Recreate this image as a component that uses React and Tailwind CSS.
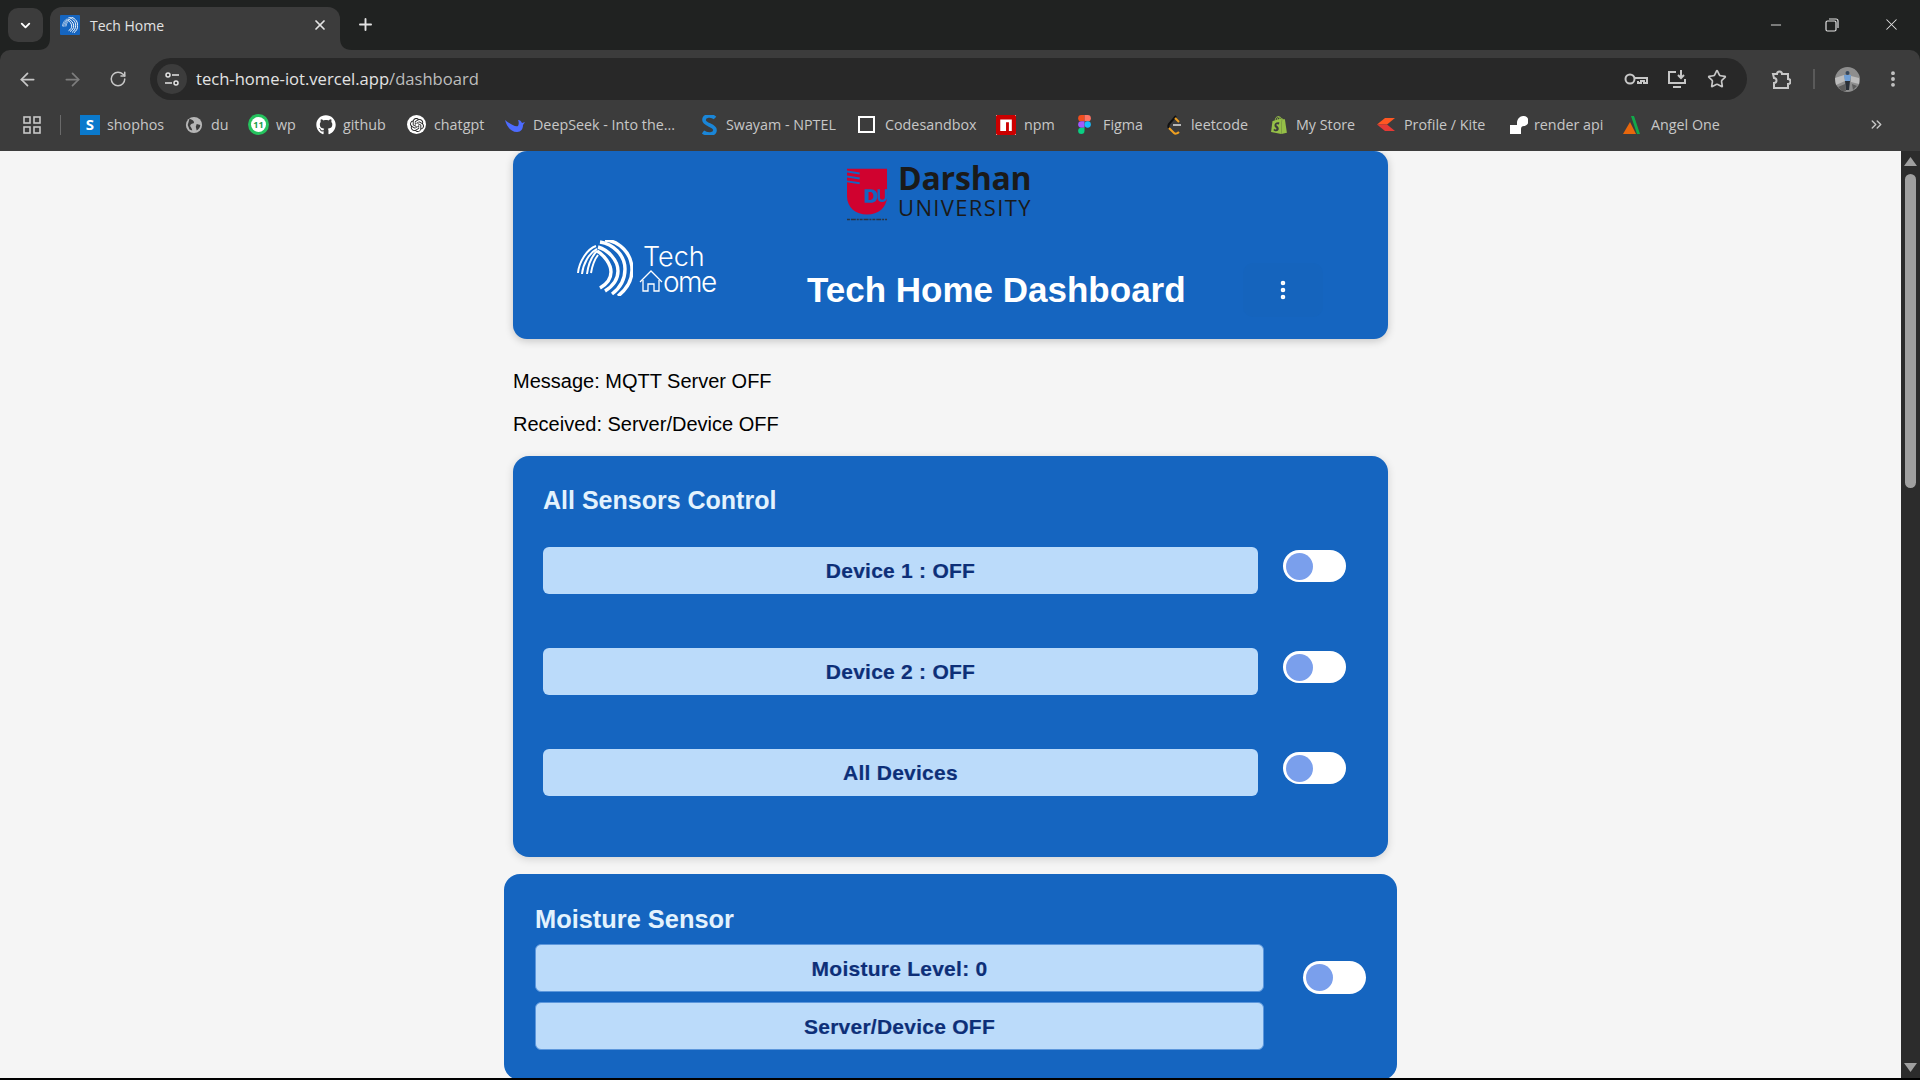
import {
    ArrowLeft,
    ArrowRight,
    ChevronDown,
    ChevronsRight,
    EllipsisVertical,
    Minus,
    Plus,
    RotateCw,
    Star,
    X,
} from "lucide-react";
import { FaGithub } from "react-icons/fa";
import { SiNpm, SiOpenai, SiShopify } from "react-icons/si";

const chromeFont = "font-['Open_Sans','Noto_Sans',sans-serif]";

const TechMark = ({ className }) => (
    <svg viewBox="0 0 56 56" className={className} fill="none" stroke="currentColor">
        <path d="M1 33C2 22 10 9 19 6" strokeWidth="2" />
        <path d="M5 34C6 24 12 13 20 9" strokeWidth="2" />
        <path d="M10 34C11 26 14 17 20 11" strokeWidth="2" />
        <path d="M14 33C15 27 17 20 21 15" strokeWidth="2" />
        <path d="M28 0C42 1 55 13 55 30C55 40 50 49 41 56" strokeWidth="3.4" />
        <path d="M23 2C36 4 48 15 48 29C48 39 43 48 35 54" strokeWidth="3.4" />
        <path d="M21 7C31 10 41 20 41 31C41 39 36 46 28 51" strokeWidth="3.4" />
        <path d="M20 11C27 15 34 24 34 32C34 38 30 44 23 48" strokeWidth="3.4" />
    </svg>
);

const HomeGlyph = ({ className }) => (
    <svg viewBox="0 0 24 22" className={className} fill="none" stroke="currentColor" strokeWidth="1.3">
        <path d="M1 12 12 1l11 11" />
        <path d="M4 10v11h5v-7h6v7h5V10" />
    </svg>
);

const ShieldLogo = () => (
    <svg viewBox="0 0 42 55" className="h-[55px] w-[41px]">
        <path d="M0 0h41v28C41 40 32 47 20.500 47S0 40 0 28Z" fill="#d0022f" />
        <path d="M0 3l13 2M0 8l13 2M0 13l13 2" stroke="#1565c0" strokeWidth="2" />
        <path d="M18 21h6c5 0 7 3 7 7s-2 7-7 7h-6Z" fill="#1565c0" />
        <path d="M22 24h2c2 0 3 2 3 4s-1 4-3 4h-2Z" fill="#d0022f" />
        <path d="M32.500 21v8c0 3 2 4 3.500 4s4-1 4-4v-8" fill="none" stroke="#1565c0" strokeWidth="2.500" />
        <path d="M0 52h41" stroke="#2c3440" strokeWidth="1.6" strokeDasharray="3 1 5 1 2 1" />
    </svg>
);

const Favicon = () => (
    <span className="flex h-5 w-5 items-center justify-center rounded-[1px] bg-[#1565c0] text-white">
        <TechMark className="h-4 w-4" />
    </span>
);

const bookmarks = [
    {
        label: "shophos",
        box: "w-[105px]",
        slot: "w-[27px]",
        icon: (
            <span className="flex h-5 w-5 items-center justify-center bg-[#0a79cc] text-[15px] font-bold leading-none text-white">
                S
            </span>
        ),
    },
    {
        label: "du",
        box: "w-[63px]",
        slot: "w-[26px]",
        icon: (
            <svg viewBox="0 0 20 20" className="h-[18px] w-[18px]">
                <circle cx="10" cy="10" r="9" fill="#b6b6b6" />
                <path d="M5 3c3 1 5 2 5 4s-3 1-4 3 2 3 2 6l-3-1-2-5ZM13 9l4 1c0 3-2 5-4 6l-1-4Z" fill="#3c3c3c" />
            </svg>
        ),
    },
    {
        label: "wp",
        box: "w-[68px]",
        slot: "w-[28px]",
        icon: (
            <span className="relative flex h-[21px] w-[21px] items-center justify-center rounded-full bg-[#25c35e]">
                <span className="flex h-[15px] w-[15px] items-center justify-center rounded-full bg-white text-[9px] font-bold leading-none text-[#1a9c4a]">
                    11
                </span>
            </span>
        ),
    },
    { label: "github", box: "w-[91px]", slot: "w-[27px]", icon: <FaGithub className="h-5 w-5 text-white" /> },
    {
        label: "chatgpt",
        box: "w-[97px]",
        slot: "w-[27px]",
        icon: (
            <span className="flex h-[19px] w-[19px] items-center justify-center rounded-full bg-white">
                <SiOpenai className="h-[14px] w-[14px] text-[#222]" />
            </span>
        ),
    },
    {
        label: "DeepSeek - Into the...",
        box: "w-[197px]",
        slot: "w-[29px]",
        icon: (
            <svg viewBox="0 0 22 18" className="h-[18px] w-[22px]">
                <path d="M1 4c2 7 6 12 12 12 4 0 6-3 6-7l2-3-3 1c-1-2-2-3-4-3 1 2 1 4 0 6-3 1-8-2-13-6Z" fill="#4d6bfe" />
            </svg>
        ),
    },
    {
        label: "Swayam - NPTEL",
        box: "w-[157px]",
        slot: "w-[25px]",
        icon: (
            <svg viewBox="0 0 16 20" className="h-5 w-4">
                <path d="M14 3C11 0 3 0 3 5s11 5 11 10-8 5-12 2" fill="none" stroke="#1a86d8" strokeWidth="3.6" />
            </svg>
        ),
    },
    {
        label: "Codesandbox",
        box: "w-[138px]",
        slot: "w-[27px]",
        icon: <span className="block h-[17px] w-[17px] border-2 border-white" />,
    },
    {
        label: "npm",
        box: "w-[82px]",
        slot: "w-[28px]",
        icon: (
            <span className="flex h-5 w-5 items-center justify-center bg-white">
                <SiNpm className="h-5 w-5 text-[#cb0000]" />
            </span>
        ),
    },
    {
        label: "Figma",
        box: "w-[88px]",
        slot: "w-[25px]",
        icon: (
            <svg viewBox="0 0 12 18" className="h-[19px] w-[13px]">
                <path d="M3 0h3v6H3a3 3 0 0 1 0-6Z" fill="#f24e1e" />
                <path d="M6 0h3a3 3 0 0 1 0 6H6Z" fill="#ff7262" />
                <path d="M3 6h3v6H3a3 3 0 0 1 0-6Z" fill="#a259ff" />
                <circle cx="9" cy="9" r="3" fill="#1abcfe" />
                <path d="M3 12h3v3a3 3 0 1 1-3-3Z" fill="#0acf83" />
            </svg>
        ),
    },
    {
        label: "leetcode",
        box: "w-[104px]",
        slot: "w-[25px]",
        icon: (
            <svg viewBox="0 0 16 20" className="h-5 w-4" fill="none" strokeWidth="2">
                <path d="M10 1 3 9c-1 2-1 3 0 4" stroke="#111" />
                <path d="m3 13 5 5c1 1 3 1 5-1" stroke="#f0a020" />
                <path d="M7 10h8" stroke="#b8b8b8" />
                <path d="m9 3 4 4" stroke="#f0a020" />
            </svg>
        ),
    },
    {
        label: "My Store",
        box: "w-[107px]",
        slot: "w-[26px]",
        icon: <SiShopify className="h-5 w-[18px] text-[#95bf47]" />,
    },
    {
        label: "Profile / Kite",
        box: "w-[133px]",
        slot: "w-[27px]",
        icon: (
            <svg viewBox="0 0 18 13" className="h-[13px] w-[18px]">
                <path d="M0 6.5 8 0h10l-8 6.5Z" fill="#ff5722" />
                <path d="M0 6.5h10l8 6.5H8Z" fill="#e53935" />
            </svg>
        ),
    },
    {
        label: "render api",
        box: "w-[112px]",
        slot: "w-[24px]",
        icon: (
            <svg viewBox="0 0 18 18" className="h-[18px] w-[18px]" fill="#fff">
                <path d="M0 9h7V7c0-4 3-7 6-7a5 5 0 0 1 1 10c-2 0-3 1-3 3v5H0Z" />
            </svg>
        ),
    },
    {
        label: "Angel One",
        box: "w-[100px]",
        slot: "w-[29px]",
        icon: (
            <svg viewBox="0 0 18 18" className="h-[18px] w-[18px]">
                <path d="M9 0h3l6 18h-3Z" fill="#12a84a" />
                <path d="M8 6 1 18h13Z" fill="#e8670c" />
            </svg>
        ),
    },
];

const Toggle = ({ className = "" }) => (
    <div className={`flex h-[32px] w-[63px] shrink-0 items-center rounded-full bg-white pl-[3px] ${className}`}>
        <span className="block h-[27px] w-[27px] rounded-full bg-[#7a9fec]" />
    </div>
);

const ValueBar = ({ children, className = "" }) => (
    <div
        className={`flex h-[47px] items-center justify-center rounded-[6px] bg-[#bbdbfa] text-[21px] font-bold tracking-[0.25px] text-[#0d2f78] [-webkit-text-stroke:0.2px_#0d2f78] ${className}`}
    >
        {children}
    </div>
);

const ControlRow = ({ label }) => (
    <div className="mb-[54px] flex items-start">
        <ValueBar className="w-[716px]">{label}</ValueBar>
        <Toggle className="ml-[25px] mt-[3px]" />
    </div>
);

const Avatar = () => (
    <svg viewBox="0 0 25 25" className="ml-[20px] h-[25px] w-[25px]">
        <circle cx="12.5" cy="12.500" r="12.500" fill="#8e8e8e" />
        <path d="M0 11 9 8l1 6-9 4ZM16 9l8 2v6l-8-2Z" fill="#bcbcbc" />
        <path d="M3 20l7-3 1 7H7ZM17 17l5 2-4 4Z" fill="#5c5c5c" />
        <circle cx="12.500" cy="6" r="2" fill="#35475c" />
        <path d="M9 8h7l-1 6h-5Z" fill="#6f9fd6" />
        <path d="M10 14h5l-1 9h-3Z" fill="#2a3038" />
    </svg>
);

const BrowserChrome = () => (
    <div className={`shrink-0 bg-[#202221] text-[#c7c7c7] ${chromeFont}`}>
        <div className="flex h-[50px] items-end pl-2">
            <div className="mb-2 flex h-[34px] w-[35px] items-center justify-center rounded-[10px] bg-[#3c3c3c] text-white">
                <ChevronDown size={15} strokeWidth={3} />
            </div>
            <div className="relative ml-[7px] flex h-[43px] w-[290px] items-center rounded-t-[12px] bg-[#3c3c3c] pb-[7px] pl-[10px] pr-[12px]">
                <svg viewBox="0 0 12 12" className="absolute bottom-0 left-[-12px] h-3 w-3">
                    <path d="M12 0v12H0C8 12 12 8 12 0Z" fill="#3c3c3c" />
                </svg>
                <svg viewBox="0 0 12 12" className="absolute bottom-0 right-[-12px] h-3 w-3">
                    <path d="M0 0v12h12C4 12 0 8 0 0Z" fill="#3c3c3c" />
                </svg>
                <Favicon />
                <span className="ml-[10px] flex-1 text-[14px] text-[#e3e3e3]">Tech Home</span>
                <X size={16} strokeWidth={2.6} className="text-[#e3e3e3]" />
            </div>
            <Plus size={19} strokeWidth={2.4} className="mb-[16px] ml-[16px] text-[#e3e3e3]" />
            <div className="mb-[16px] ml-auto flex items-center text-[#e3e3e3]">
                <Minus size={16} strokeWidth={1.4} className="mr-[41px]" />
                <svg viewBox="0 0 14 14" className="mr-[43px] h-[14px] w-[14px]" fill="none" stroke="currentColor" strokeWidth="1.2">
                    <rect x="1" y="3" width="10" height="10" rx="1.5" />
                    <path d="M4 1h7a2 2 0 0 1 2 2v7" />
                </svg>
                <X size={19} strokeWidth={1.3} className="mr-[19px]" />
            </div>
        </div>

        <div className="rounded-t-[10px] bg-[#3c3c3c] pt-2">
            <div className="flex h-[42px] items-center pl-[17px] pr-[16px]">
                <ArrowLeft size={21} strokeWidth={2} className="text-[#c7c7c7]" />
                <ArrowRight size={21} strokeWidth={2} className="ml-[24px] text-[#7d7d7d]" />
                <RotateCw size={18} strokeWidth={2} className="ml-[26px] text-[#c7c7c7]" />
                <div className="ml-[23px] flex h-[42px] w-[1597px] items-center rounded-full bg-[#282828] pl-[7px] pr-[20px]">
                    <span className="flex h-[30px] w-[30px] items-center justify-center rounded-full bg-[#3c3c3c]">
                        <svg viewBox="0 0 16 16" className="h-4 w-4" fill="none" stroke="#e3e3e3" strokeWidth="1.5">
                            <circle cx="4" cy="4" r="2" />
                            <path d="M8 4h7M1 12h7" />
                            <circle cx="12" cy="12" r="2" />
                        </svg>
                    </span>
                    <span className="ml-[9px] flex-1 text-[16.6px] text-[#e3e3e3]">
                        tech-home-iot.vercel.app<span className="text-[#bdbdbd]">/dashboard</span>
                    </span>
                    <svg viewBox="0 0 24 14" className="h-[14px] w-[24px]" fill="none" stroke="#c7c7c7" strokeWidth="2">
                        <circle cx="6" cy="7" r="4.5" />
                        <path d="M11 6h12v5h-3V9h-3v2h-3V9" />
                    </svg>
                    <svg viewBox="0 0 20 20" className="ml-[19px] h-5 w-5" fill="none" stroke="#c7c7c7" strokeWidth="2">
                        <path d="M9 3H2v11h16v-4M6 18h8" />
                        <path d="M14 1v8m-3-3 3 3 3-3" />
                    </svg>
                    <Star size={20} strokeWidth={2} className="ml-[20px] text-[#c7c7c7]" />
                </div>
                <svg viewBox="0 0 20 20" className="ml-[24px] h-5 w-5" fill="none" stroke="#c7c7c7" strokeWidth="2">
                    <path d="M2 5h4a2.5 2.5 0 0 1 5 0h6v5a2.5 2.5 0 0 1 0 5v4H3v-5a2.500 2.500 0 0 0 0-5Z" />
                </svg>
                <span className="ml-[22px] h-[20px] w-[2px] bg-[#5a5a5a]" />
                <Avatar />
                <EllipsisVertical size={20} strokeWidth={2.6} className="ml-[23px] text-[#c7c7c7]" />
            </div>

            <div className="flex h-[51px] items-center pb-[2px] pl-[23px] pr-[35px]">
                <svg viewBox="0 0 18 18" className="h-[18px] w-[18px]" fill="none" stroke="#c7c7c7" strokeWidth="1.6">
                    <rect x="1" y="1" width="6" height="6" />
                    <rect x="11" y="1" width="6" height="6" />
                    <rect x="1" y="11" width="6" height="6" />
                    <rect x="11" y="11" width="6" height="6" />
                </svg>
                <span className="ml-[19px] mr-[19px] h-[20px] w-[1px] bg-[#6a6a6a]" />
                <div className="flex items-center">
                    {bookmarks.map((item) => (
                        <div key={item.label} className={`flex items-center ${item.box}`}>
                            <span className={`flex shrink-0 items-center ${item.slot}`}>{item.icon}</span>
                            <span className="whitespace-nowrap text-[14.3px] text-[#c7c7c7]">{item.label}</span>
                        </div>
                    ))}
                </div>
                <ChevronsRight size={17} strokeWidth={2} className="ml-auto text-[#c7c7c7]" />
            </div>
        </div>
    </div>
);

const Scrollbar = () => (
    <div className="flex w-[19px] shrink-0 flex-col items-center bg-[#2c2c2c] pt-[6px]">
        <svg viewBox="0 0 13 9" className="h-[9px] w-[13px]">
            <path d="M6.500 0 13 9H0Z" fill="#a0a0a0" />
        </svg>
        <div className="mt-[8px] h-[314px] w-[11px] rounded-full bg-[#a0a0a0]" />
        <svg viewBox="0 0 13 9" className="mb-[6px] mt-auto h-[9px] w-[13px]">
            <path d="M6.500 9 13 0H0Z" fill="#a0a0a0" />
        </svg>
    </div>
);

const Header = () => (
    <header className="h-[188px] w-full shrink-0 rounded-[14px] bg-[#1565c0] shadow-[0_2px_8px_rgba(0,0,0,0.2)]">
        <div className="ml-[334px] flex h-[72px] items-start pt-[17px]">
            <ShieldLogo />
            <div className="ml-[10px] mt-[-5px] font-['Open_Sans',sans-serif] text-[#1a1a1a]">
                <p className="text-[32px] font-bold leading-[30px] tracking-[-0.2px]">Darshan</p>
                <p className="mt-[3px] text-[22px] leading-[22px] tracking-[1.35px]">UNIVERSITY</p>
            </div>
        </div>
        <div className="flex items-start pl-[64px] pt-[17px]">
            <div className="flex w-[230px] shrink-0 items-start text-white">
                <TechMark className="h-[56px] w-[56px] shrink-0" />
                <div className="ml-[6px] mt-[5px] font-['Inter',sans-serif] font-light">
                    <p className="ml-[4px] text-[27px] leading-[24px]">Tech</p>
                    <p className="flex items-end text-[28px] leading-[26px] tracking-[-1.5px]">
                        <HomeGlyph className="mb-[3px] h-[22px] w-[24px] shrink-0" />
                        <span>ome</span>
                    </p>
                </div>
            </div>
            <h1 className="mt-[28px] whitespace-nowrap font-['Liberation_Sans',sans-serif] text-[35px] font-bold leading-[44px] text-white">
                Tech Home Dashboard
            </h1>
            <div className="ml-[57px] mt-[23px] flex h-[54px] w-[80px] items-center justify-center rounded-[10px] bg-[#1564bd] text-white">
                <EllipsisVertical size={24} strokeWidth={2.6} />
            </div>
        </div>
    </header>
);

export default function App() {
    return (
        <div className="h-screen overflow-hidden bg-black">
            <div className="flex h-[1078px] flex-col overflow-hidden">
                <BrowserChrome />
                <div className="flex min-h-0 flex-1">
                    <main className="flex min-w-0 flex-1 flex-col items-center overflow-hidden bg-[#f5f5f5] font-['Liberation_Sans',sans-serif]">
                        <div className="w-[875px]">
                            <Header />
                            <p className="mt-[31px] text-[20px] leading-[23px] text-black">Message: MQTT Server OFF</p>
                            <p className="mt-[20px] text-[20px] leading-[23px] text-black">Received: Server/Device OFF</p>

                            <section className="mt-[20px] rounded-[16px] bg-[#1565c0] pb-[7px] pl-[30px] pr-[42px] pt-[30px] shadow-[0_2px_8px_rgba(0,0,0,0.15)]">
                                <h2 className="mb-[33px] text-[25px] font-bold leading-[28px] text-[#e3f2fd]">All Sensors Control</h2>
                                <ControlRow label="Device 1 : OFF" />
                                <ControlRow label="Device 2 : OFF" />
                                <ControlRow label="All Devices" />
                            </section>

                            <section className="-mx-[9px] mt-[17px] flex items-center rounded-[16px] bg-[#1565c0] pb-[30px] pl-[31px] pr-[31px] pt-[31px]">
                                <div className="w-[729px]">
                                    <h2 className="text-[25.4px] font-bold leading-[28px] text-[#e3f2fd]">Moisture Sensor</h2>
                                    <ValueBar className="mt-[11px] h-[48px] border border-[#5c97dc] pt-[1px]">Moisture Level: 0</ValueBar>
                                    <ValueBar className="mt-[10px] h-[48px] border border-[#5c97dc] pt-[1px]">Server/Device OFF</ValueBar>
                                </div>
                                <Toggle className="ml-[39px] h-[33px]" />
                            </section>
                        </div>
                    </main>
                    <Scrollbar />
                </div>
            </div>
        </div>
    );
}
